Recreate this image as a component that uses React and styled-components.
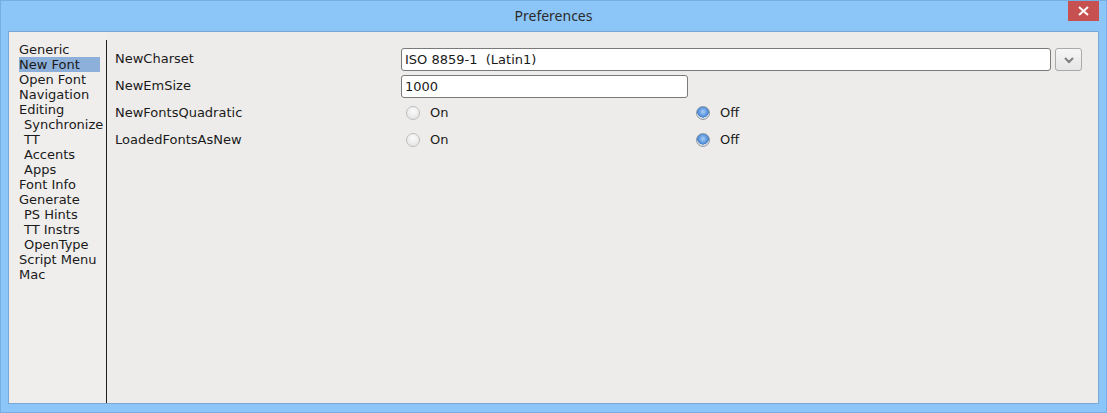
import React from 'react';
import styled, { createGlobalStyle } from 'styled-components';

const GlobalStyle = createGlobalStyle`
  html, body {
    margin: 0;
    padding: 0;
    background: #8cc5f7;
  }
  * {
    box-sizing: border-box;
  }
`;

const sections = [
  { label: 'Generic' },
  { label: 'New Font', selected: true },
  { label: 'Open Font' },
  { label: 'Navigation' },
  { label: 'Editing' },
  { label: 'Synchronize', sub: true },
  { label: 'TT', sub: true },
  { label: 'Accents', sub: true },
  { label: 'Apps', sub: true },
  { label: 'Font Info' },
  { label: 'Generate' },
  { label: 'PS Hints', sub: true },
  { label: 'TT Instrs', sub: true },
  { label: 'OpenType', sub: true },
  { label: 'Script Menu' },
  { label: 'Mac' },
];

function Radio({ checked, label }) {
  return (
    <RadioItem>
      <RadioCircle checked={checked} />
      <span>{label}</span>
    </RadioItem>
  );
}

function App() {
  return (
    <>
      <GlobalStyle />
      <Window>
        <TitleBar>
          <Title>Preferences</Title>
          <CloseButton>
            <svg width="11" height="10" viewBox="0 0 11 10">
              <path d="M1 1 L10 9 M10 1 L1 9" stroke="#fff" strokeWidth="2" />
            </svg>
          </CloseButton>
        </TitleBar>

        <Client>
          <Sidebar>
            {sections.map((s) => (
              <SectionItem key={s.label} sub={s.sub} selected={s.selected}>
                {s.label}
              </SectionItem>
            ))}
          </Sidebar>
          <Divider />

          <Panel>
            <Row>
              <Label>NewCharset</Label>
              <FieldWithButton>
                <TextBox wide>ISO 8859-1&nbsp;&nbsp;(Latin1)</TextBox>
                <DropButton>
                  <svg width="12" height="8" viewBox="0 0 12 8">
                    <path d="M2 2 L6 6 L10 2" fill="none" stroke="#7d7d7d" strokeWidth="2" />
                  </svg>
                </DropButton>
              </FieldWithButton>
            </Row>

            <Row>
              <Label>NewEmSize</Label>
              <TextBox>1000</TextBox>
            </Row>

            <Row>
              <Label>NewFontsQuadratic</Label>
              <RadioGroup>
                <Radio label="On" />
                <Radio label="Off" checked />
              </RadioGroup>
            </Row>

            <Row>
              <Label>LoadedFontsAsNew</Label>
              <RadioGroup>
                <Radio label="On" />
                <Radio label="Off" checked />
              </RadioGroup>
            </Row>
          </Panel>
        </Client>
      </Window>
    </>
  );
}

const Window = styled.div`
  width: 1107px;
  height: 413px;
  display: flex;
  flex-direction: column;
  background: #8cc5f7;
  border: 1px solid #74aee3;
  padding: 0 7px 8px 7px;
  font-family: 'DejaVu Sans', 'Liberation Sans', sans-serif;
  font-size: 13px;
  color: #1a1a1a;
`;

const TitleBar = styled.div`
  height: 30px;
  flex: none;
  display: flex;
  align-items: center;
  justify-content: center;
  position: relative;
`;

const Title = styled.div`
  font-family: 'Noto Sans', 'Open Sans', sans-serif;
  font-size: 14px;
  color: #2b2b2b;
  margin-top: -1px;
`;

const CloseButton = styled.div`
  position: absolute;
  top: 0;
  right: 0;
  width: 31px;
  height: 20px;
  background: #c75050;
  display: flex;
  align-items: center;
  justify-content: center;
`;

const Client = styled.div`
  flex: 1;
  display: flex;
  background: #edecea;
  border: 1px solid #78a9d6;
`;

const Sidebar = styled.div`
  width: 97px;
  padding: 10px 0 0 10px;
  background: #efeeed;
  display: flex;
  flex-direction: column;
`;

const SectionItem = styled.div`
  height: 15px;
  line-height: 15px;
  padding-left: ${(p) => (p.sub ? '5px' : '0')};
  margin-right: 6px;
  white-space: nowrap;
  background: ${(p) => (p.selected ? '#8cb0d9' : 'transparent')};
`;

const Divider = styled.div`
  width: 1px;
  margin-top: 8px;
  background: #1e1e1e;
`;

const Panel = styled.div`
  flex: 1;
  padding: 16px 0 0 8px;
  display: flex;
  flex-direction: column;
`;

const Row = styled.div`
  height: 27px;
  display: grid;
  grid-template-columns: 286px 1fr;
  align-items: start;
`;

const Label = styled.div`
  line-height: 21px;
`;

const FieldWithButton = styled.div`
  display: flex;
  gap: 4px;
  padding-right: 16px;
`;

const TextBox = styled.div`
  height: 23px;
  width: ${(p) => (p.wide ? 'auto' : '287px')};
  flex: ${(p) => (p.wide ? '1' : 'none')};
  background: #fff;
  border: 1px solid #7a7a7a;
  border-radius: 3px;
  padding: 0 3px;
  line-height: 21px;
  white-space: nowrap;
`;

const DropButton = styled.div`
  width: 27px;
  height: 23px;
  border: 1px solid #a9a9a9;
  border-radius: 3px;
  background: linear-gradient(#f6f6f6, #e6e6e6);
  display: flex;
  align-items: center;
  justify-content: center;
`;

const RadioGroup = styled.div`
  display: grid;
  grid-template-columns: 290px 1fr;
  padding-left: 5px;
  height: 21px;
  align-items: center;
`;

const RadioItem = styled.div`
  display: flex;
  align-items: center;
  gap: 10px;
`;

const RadioCircle = styled.span`
  width: 14px;
  height: 14px;
  border-radius: 50%;
  border: 1px solid ${(p) => (p.checked ? '#8f9aa6' : '#bdbdbd')};
  background: ${(p) =>
    p.checked
      ? 'radial-gradient(circle at 50% 40%, #a9cdf5 0, #5d97de 45%, #3f7ccd 60%, #d9d9d9 63%, #e6e6e6 100%)'
      : 'radial-gradient(circle at 50% 35%, #fbfbfb 0, #ebebeb 60%, #dcdcdc 100%)'};
  flex: none;
`;

export default App;
